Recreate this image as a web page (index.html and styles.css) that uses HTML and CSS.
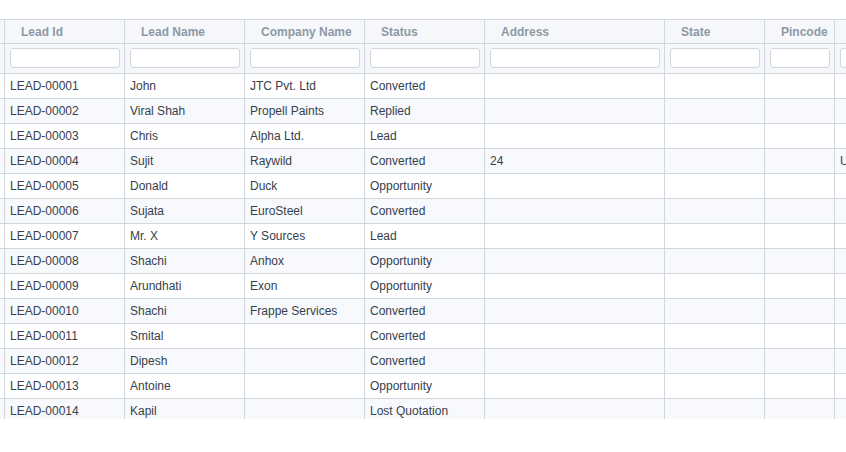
FILE: index.html
```html
<!DOCTYPE html>
<html>
<head>
<meta charset="utf-8">
<link rel="stylesheet" href="styles.css">
</head>
<body>
<div class="viewport">
  <div class="grid">
    <div class="row head">
      <div class="cell idx"></div>
      <div class="cell">Lead Id</div>
      <div class="cell">Lead Name</div>
      <div class="cell">Company Name</div>
      <div class="cell">Status</div>
      <div class="cell">Address</div>
      <div class="cell">State</div>
      <div class="cell">Pincode</div>
      <div class="cell"></div>
    </div>
    <div class="row filter">
      <div class="cell idx"></div>
      <div class="cell"><input class="finput" type="text"></div>
      <div class="cell"><input class="finput" type="text"></div>
      <div class="cell"><input class="finput" type="text"></div>
      <div class="cell"><input class="finput" type="text"></div>
      <div class="cell"><input class="finput" type="text"></div>
      <div class="cell"><input class="finput" type="text"></div>
      <div class="cell"><input class="finput" type="text"></div>
      <div class="cell"><input class="finput" type="text"></div>
    </div>
    <div class="row data"><div class="cell idx"></div><div class="cell">LEAD-00001</div><div class="cell">John</div><div class="cell">JTC Pvt. Ltd</div><div class="cell">Converted</div><div class="cell"></div><div class="cell"></div><div class="cell"></div><div class="cell"></div></div>
    <div class="row data alt"><div class="cell idx"></div><div class="cell">LEAD-00002</div><div class="cell">Viral Shah</div><div class="cell">Propell Paints</div><div class="cell">Replied</div><div class="cell"></div><div class="cell"></div><div class="cell"></div><div class="cell"></div></div>
    <div class="row data"><div class="cell idx"></div><div class="cell">LEAD-00003</div><div class="cell">Chris</div><div class="cell">Alpha Ltd.</div><div class="cell">Lead</div><div class="cell"></div><div class="cell"></div><div class="cell"></div><div class="cell"></div></div>
    <div class="row data alt"><div class="cell idx"></div><div class="cell">LEAD-00004</div><div class="cell">Sujit</div><div class="cell">Raywild</div><div class="cell">Converted</div><div class="cell">24</div><div class="cell"></div><div class="cell"></div><div class="cell">U</div></div>
    <div class="row data"><div class="cell idx"></div><div class="cell">LEAD-00005</div><div class="cell">Donald</div><div class="cell">Duck</div><div class="cell">Opportunity</div><div class="cell"></div><div class="cell"></div><div class="cell"></div><div class="cell"></div></div>
    <div class="row data alt"><div class="cell idx"></div><div class="cell">LEAD-00006</div><div class="cell">Sujata</div><div class="cell">EuroSteel</div><div class="cell">Converted</div><div class="cell"></div><div class="cell"></div><div class="cell"></div><div class="cell"></div></div>
    <div class="row data"><div class="cell idx"></div><div class="cell">LEAD-00007</div><div class="cell">Mr. X</div><div class="cell">Y Sources</div><div class="cell">Lead</div><div class="cell"></div><div class="cell"></div><div class="cell"></div><div class="cell"></div></div>
    <div class="row data alt"><div class="cell idx"></div><div class="cell">LEAD-00008</div><div class="cell">Shachi</div><div class="cell">Anhox</div><div class="cell">Opportunity</div><div class="cell"></div><div class="cell"></div><div class="cell"></div><div class="cell"></div></div>
    <div class="row data"><div class="cell idx"></div><div class="cell">LEAD-00009</div><div class="cell">Arundhati</div><div class="cell">Exon</div><div class="cell">Opportunity</div><div class="cell"></div><div class="cell"></div><div class="cell"></div><div class="cell"></div></div>
    <div class="row data alt"><div class="cell idx"></div><div class="cell">LEAD-00010</div><div class="cell">Shachi</div><div class="cell">Frappe Services</div><div class="cell">Converted</div><div class="cell"></div><div class="cell"></div><div class="cell"></div><div class="cell"></div></div>
    <div class="row data"><div class="cell idx"></div><div class="cell">LEAD-00011</div><div class="cell">Smital</div><div class="cell"></div><div class="cell">Converted</div><div class="cell"></div><div class="cell"></div><div class="cell"></div><div class="cell"></div></div>
    <div class="row data alt"><div class="cell idx"></div><div class="cell">LEAD-00012</div><div class="cell">Dipesh</div><div class="cell"></div><div class="cell">Converted</div><div class="cell"></div><div class="cell"></div><div class="cell"></div><div class="cell"></div></div>
    <div class="row data"><div class="cell idx"></div><div class="cell">LEAD-00013</div><div class="cell">Antoine</div><div class="cell"></div><div class="cell">Opportunity</div><div class="cell"></div><div class="cell"></div><div class="cell"></div><div class="cell"></div></div>
    <div class="row data alt"><div class="cell idx"></div><div class="cell">LEAD-00014</div><div class="cell">Kapil</div><div class="cell"></div><div class="cell">Lost Quotation</div><div class="cell"></div><div class="cell"></div><div class="cell"></div><div class="cell"></div></div>
  </div>
</div>
</body>
</html>
```
FILE: styles.css
```css
html, body {
  margin: 0;
  padding: 0;
  background: #ffffff;
}
body {
  font-family: "Liberation Sans", Arial, sans-serif;
  font-size: 12px;
  color: #36414c;
}
.viewport {
  margin-top: 19px;
  width: 846px;
  height: 400px;
  overflow: hidden;
}
.grid {
  width: 1010px;
  border-top: 1px solid #d1d8dd;
}
.row {
  display: grid;
  grid-template-columns: 5px 120px 120px 120px 120px 180px 100px 70px 175px;
  border-bottom: 1px solid #d1d8dd;
  box-sizing: border-box;
}
.cell {
  box-sizing: border-box;
  border-right: 1px solid #d1d8dd;
  white-space: nowrap;
  overflow: hidden;
  display: flex;
  align-items: center;
}
.head {
  height: 24px;
  background: #f5f7fa;
}
.head .cell {
  font-weight: bold;
  color: #8d99a6;
  padding-left: 16px;
}
.head .cell.idx, .filter .cell.idx, .data .cell.idx {
  padding: 0;
}
.filter {
  height: 30px;
  background: #f5f7fa;
}
.filter .cell {
  align-items: flex-start;
  padding: 4px 4px 0 5px;
}
.finput {
  width: 100%;
  height: 20px;
  box-sizing: border-box;
  border: 1px solid #d1d8dd;
  border-radius: 3px;
  background: #ffffff;
  margin: 0;
  padding: 0 4px;
  font: inherit;
  outline: none;
}
.data {
  height: 25px;
  background: #ffffff;
}
.data.alt {
  background: #f7f9fc;
}
.data .cell {
  padding-left: 5px;
}
```
